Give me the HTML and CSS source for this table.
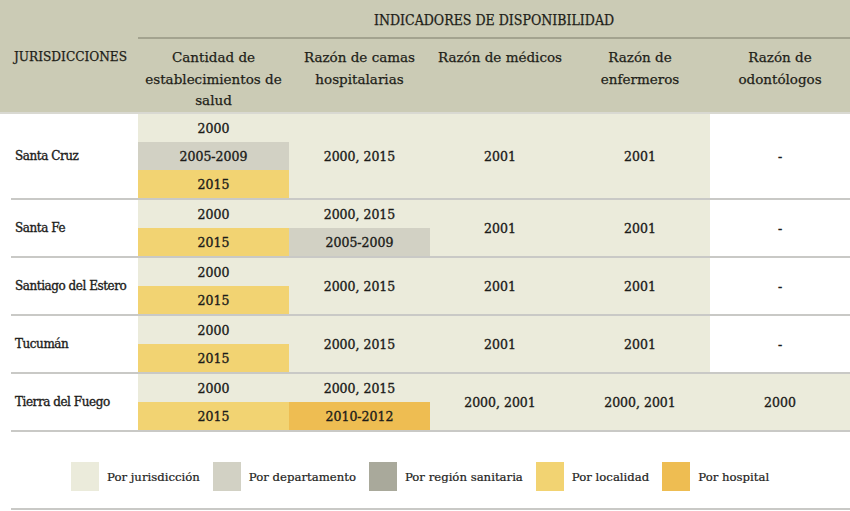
FILE: index.html
```html
<!DOCTYPE html>
<html lang="es">
<head>
<meta charset="utf-8">
<title>Indicadores de disponibilidad</title>
<link rel="stylesheet" href="styles.css">
</head>
<body>
<div class="page">
  <table class="grid">
    <colgroup>
      <col class="c-sp"><col class="c-jur"><col class="c-1"><col class="c-2"><col class="c-3"><col class="c-4"><col class="c-5">
    </colgroup>
    <thead>
      <tr>
        <th class="h-jur" rowspan="2" colspan="2">JURISDICCIONES</th>
        <th class="h-ind" colspan="5">INDICADORES DE DISPONIBILIDAD</th>
      </tr>
      <tr class="h-sub">
        <th>Cantidad de establecimientos de salud</th>
        <th>Razón de camas hospitalarias</th>
        <th>Razón de médicos</th>
        <th>Razón de enfermeros</th>
        <th>Razón de odontólogos</th>
      </tr>
    </thead>
    <tbody>
      <tr class="g first">
        <td class="sp" rowspan="3"></td>
        <td class="name" rowspan="3">Santa Cruz</td>
        <td class="j">2000</td>
        <td class="j" rowspan="3">2000, 2015</td>
        <td class="j" rowspan="3">2001</td>
        <td class="j" rowspan="3">2001</td>
        <td class="w" rowspan="3">-</td>
      </tr>
      <tr><td class="d">2005-2009</td></tr>
      <tr><td class="l">2015</td></tr>

      <tr class="g">
        <td class="sp" rowspan="2"></td>
        <td class="name" rowspan="2">Santa Fe</td>
        <td class="j">2000</td>
        <td class="j">2000, 2015</td>
        <td class="j" rowspan="2">2001</td>
        <td class="j" rowspan="2">2001</td>
        <td class="w" rowspan="2">-</td>
      </tr>
      <tr><td class="l">2015</td><td class="d">2005-2009</td></tr>

      <tr class="g">
        <td class="sp" rowspan="2"></td>
        <td class="name" rowspan="2">Santiago del Estero</td>
        <td class="j">2000</td>
        <td class="j" rowspan="2">2000, 2015</td>
        <td class="j" rowspan="2">2001</td>
        <td class="j" rowspan="2">2001</td>
        <td class="w" rowspan="2">-</td>
      </tr>
      <tr><td class="l">2015</td></tr>

      <tr class="g">
        <td class="sp" rowspan="2"></td>
        <td class="name" rowspan="2">Tucumán</td>
        <td class="j">2000</td>
        <td class="j" rowspan="2">2000, 2015</td>
        <td class="j" rowspan="2">2001</td>
        <td class="j" rowspan="2">2001</td>
        <td class="w" rowspan="2">-</td>
      </tr>
      <tr><td class="l">2015</td></tr>

      <tr class="g">
        <td class="sp" rowspan="2"></td>
        <td class="name" rowspan="2">Tierra del Fuego</td>
        <td class="j">2000</td>
        <td class="j">2000, 2015</td>
        <td class="j" rowspan="2">2000, 2001</td>
        <td class="j" rowspan="2">2000, 2001</td>
        <td class="j" rowspan="2">2000</td>
      </tr>
      <tr><td class="l">2015</td><td class="h">2010-2012</td></tr>
    </tbody>
  </table>

  <div class="legend">
    <div class="item"><span class="sw j"></span>Por jurisdicción</div>
    <div class="item"><span class="sw d"></span>Por departamento</div>
    <div class="item"><span class="sw r"></span>Por región sanitaria</div>
    <div class="item"><span class="sw l"></span>Por localidad</div>
    <div class="item"><span class="sw h"></span>Por hospital</div>
  </div>
</div>
</body>
</html>
```

FILE: styles.css
```css
html, body {
  margin: 0;
  padding: 0;
  background: #ffffff;
}

body {
  font-family: "DejaVu Serif", "Liberation Serif", serif;
  color: #1c1c1a;
}

.page {
  width: 850px;
}

.grid {
  width: 850px;
  table-layout: fixed;
  border-collapse: separate;
  border-spacing: 0;
}

.c-sp { width: 11px; }
.c-jur { width: 127px; }
.c-1 { width: 151px; }
.c-2 { width: 141px; }
.c-3 { width: 140px; }
.c-4 { width: 140px; }
.c-5 { width: 140px; }

th {
  background: #cbcbb5;
  font-weight: normal;
  color: #1e1e18;
  padding: 0;
  box-sizing: content-box;
  -webkit-text-stroke: 0.25px currentColor;
}

.h-jur {
  text-align: left;
  vertical-align: middle;
  padding-left: 14px;
  font-family: "DejaVu Serif Condensed", "DejaVu Serif", serif;
  font-size: 13.5px;
  border-bottom: 2px solid #d9d9d2;
}

.h-ind {
  height: 34px;
  padding-top: 3px;
  vertical-align: middle;
  text-align: center;
  font-family: "DejaVu Serif Condensed", "DejaVu Serif", serif;
  font-size: 14px;
  border-bottom: 2px solid #a3a38f;
}

.h-sub th {
  height: 65px;
  vertical-align: top;
  text-align: center;
  font-size: 13.5px;
  line-height: 21.5px;
  padding: 8px 2px 0;
  border-bottom: 2px solid #d9d9d2;
}

td {
  height: 28px;
  padding: 0;
  font-size: 12.5px;
  text-align: center;
  vertical-align: middle;
  -webkit-text-stroke: 0.35px currentColor;
}

tr.g td {
  border-top: 2px solid #c9c9c6;
}

tr.g.first td {
  border-top: none;
}

tr.g td.sp {
  border-top: none;
}

.sp { background: #ffffff; }

.name {
  background: #ffffff;
  text-align: left;
  padding-left: 4px;
  font-size: 12px;
  letter-spacing: -0.45px;
}

.j { background: #ebebdb; }
.d { background: #d2d1c4; }
.r { background: #a9a99b; }
.l { background: #f2d372; }
.h { background: #eebd52; }
.w { background: #ffffff; }

.legend {
  margin-left: 11px;
  border-top: 2px solid #c9c9c6;
  border-bottom: 2px solid #c9c9c6;
  display: flex;
  align-items: center;
  gap: 13px;
  padding: 30px 0 17px 60px;
}

.item {
  display: flex;
  align-items: center;
  gap: 8px;
  font-size: 11.7px;
  color: #1e1e1c;
  -webkit-text-stroke: 0.2px currentColor;
}

.sw {
  display: block;
  width: 28px;
  height: 29px;
  -webkit-text-stroke: 0;
}
```
